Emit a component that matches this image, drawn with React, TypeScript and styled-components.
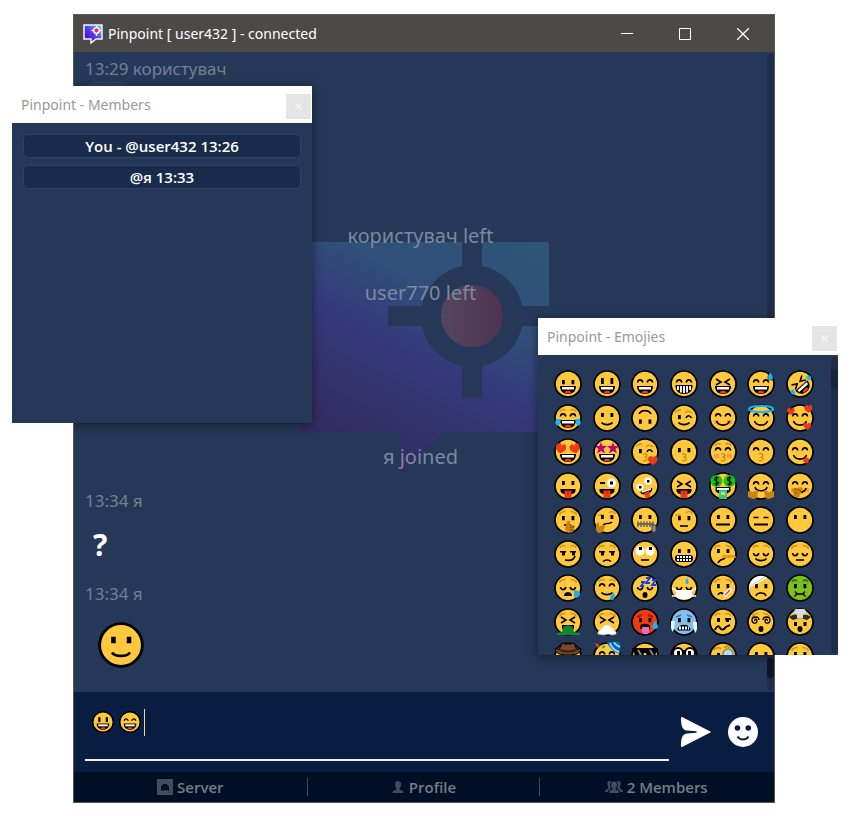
import React from "react";
import styled, { createGlobalStyle } from "styled-components";

const GlobalStyle = createGlobalStyle`
  * { box-sizing: border-box; }
  body {
    margin: 0;
    background: #ffffff;
    font-family: "Noto Sans", "Open Sans", sans-serif;
  }
  button { font: inherit; color: inherit; border: 0; background: none; padding: 0; cursor: pointer; }
  svg { display: block; }
`;

/* ---------- Emoji drawing ---------- */

const BROW = "#d6930f";
const line = { fill: "none", stroke: "#000", strokeWidth: 1.6 } as const;
const brow = { fill: "none", stroke: BROW, strokeWidth: 1.5 } as const;
const heartPath = "M0 5C-5 2-6-1-4-3S0-4 0-1.5C0-4 3-5 4-3S5 2 0 5z";
const starPath = "M0-6 1.5-2 6-2 2.5 1 4 5.5 0 3-4 5.5-2.5 1-6-2-1.5-2z";

const parts: Record<string, React.ReactNode> = {
  dots: <path d="M8 10h2.800v4.200H8zM17.500 10h2.800v4.200h-2.800z" />,
  tall: <path d="M8 8h2.800v6H8zM17.500 8h2.800v6h-2.800z" />,
  lowDots: <path d="M8 15.500h2.800v4.200H8zM17.500 15.500h2.800v4.200h-2.800z" />,
  highDots: <path d="M8 9h2.800v4H8zM17.500 9h2.800v4h-2.800z" />,
  happy: <path {...line} d="M6.500 12.500C7 9 11 9 11.800 12.500M16.200 12.500C17 9 21 9 21.500 12.500" />,
  closed: <path {...line} d="M6.500 13C7 16.500 11 16.500 11.800 13M16.200 13C17 16.500 21 16.500 21.500 13" />,
  squint: <path {...line} d="M7 9l5 3-5 3M21 9l-5 3 5 3" />,
  flatEyes: <path {...line} d="M6.500 11.500h5M16.500 11.500h5" />,
  wink: (
    <>
      <path d="M8 11h2.800v4.200H8z" />
      <path {...line} d="M16 14c1-3 4-3 5.500 0" />
      <path {...brow} d="M5 9c1-2 3-3 6-3M15 9c2-2.500 5-2 7 0" />
    </>
  ),
  brows: <path {...brow} d="M5.500 9C6 7 8 5.500 11.500 5.500M16.500 5.500C20 5.500 22 7 22.500 9" />,
  archBrows: <path {...brow} d="M6 8c1-3 4-3 5.500-1.500M16.500 6.500C18 5 21 5 22 8" />,
  oneBrow: <path {...brow} d="M5 9h6M16 7c2-2 5-2 6.500 1" />,
  open: (
    <>
      <path d="M6 16h16c0 5-3 8-8 8s-8-3-8-8z" />
      <path d="M8 17h12v2.500H8z" fill="#fff" />
      <path d="M10.500 22.500c1-2.500 6-2.500 7 0-2 1.300-5 1.300-7 0z" fill="#f03a17" />
    </>
  ),
  grin: (
    <>
      <path d="M5.500 15h17c0 6-3 9-8.500 9s-8.500-3-8.500-9z" />
      <path d="M7 16h2v4H7zM10 16h2v6.500h-2zM13 16h2v7h-2zM16 16h2v6.500h-2zM19 16h2v4h-2z" fill="#eee" />
    </>
  ),
  smile: <path {...line} d="M8.500 18.500c2 2.800 9 2.800 11 0" />,
  wideSmile: <path {...line} d="M7.500 17c2 5.500 11 5.500 13 0" />,
  flipSmile: <path {...line} d="M8 10c2-4.500 10-4.500 12 0" />,
  blush: <path d="M5 16h5v4H5zM18 16h5v4h-5z" fill="#ff9550" />,
  kiss: <path {...brow} d="M12 16c5-1 5 3 1.500 3C17 19 17 24 12 22.500" />,
  flat: <path {...line} strokeWidth={2} d="M7 18.500h14" />,
  shortFlat: <path {...line} d="M10 20h8" />,
  frown: <path {...line} d="M9 22c1-4 9-4 10 0" />,
  shortFrown: <path {...line} d="M10 21.500c2-2 6-2 8 0" />,
  smirk: <path {...line} d="M11 20c5 1 9 0 10-4" />,
  sideEyes: <path d="M6 11h6v1.500h-1v3H8v-3H6zM16 11h6v1.500h-1v3h-3v-3h-2z" />,
  tongue: (
    <>
      <path d="M6.500 17h15v1.500c0 2-2 4-7.500 4s-7.500-2-7.500-4z" />
      <path d="M10.500 18.500h7V26h-7z" fill="#f03a17" />
      <path d="M14 19v4" stroke="#c01a10" />
    </>
  ),
  tears: <path d="M2 15h5l-1 5-3 2-2-3zM26 15h-5l1 5 3 2 2-3z" fill="#1cb5f0" />,
  sideTears: <path d="M1.500 13l4 0-.5 4-2.500 1-1.500-2zM26.500 13l-4 0 .5 4 2.500 1 1.500-2z" fill="#1cb5f0" />,
  sweat: <path d="M23.500 2c4 5 3 8 0 8s-4-3 0-8z" fill="#1cb5f0" stroke="#000" strokeWidth=".5" />,
  halo: <ellipse cx="14" cy="5" rx="12" ry="3" fill="none" stroke="#16b5f5" strokeWidth="2" />,
  heartEyes: (
    <g fill="#f03a17">
      <path d={heartPath} transform="translate(7 10) rotate(15) scale(1.100)" />
      <path d={heartPath} transform="translate(21 10) rotate(-15) scale(1.100)" />
    </g>
  ),
  starEyes: (
    <g fill="#bf0077">
      <path d={starPath} transform="translate(8 10)" />
      <path d={starPath} transform="translate(20 10)" />
    </g>
  ),
  love: (
    <g fill="#f03a17">
      <path d={heartPath} transform="translate(5 7) scale(.8)" />
      <path d={heartPath} transform="translate(22.500 4.500) scale(.85)" />
      <path d={heartPath} transform="translate(21.500 22) scale(.8)" />
    </g>
  ),
  kissHeart: <path d={heartPath} transform="translate(22 22)" fill="#f03a17" />,
  lick: <path d="M17 22c2-4 7-3 6 1s-5 3-6-1z" fill="#f03a17" />,
  winkWide: (
    <>
      <circle cx="18.500" cy="11" r="4.500" fill="#fff" />
      <path d="M17 9.500h3v3h-3z" />
      <path {...line} strokeWidth={2} d="M7 11h5" />
    </>
  ),
  zany: (
    <>
      <circle cx="9" cy="15" r="3.500" fill="#fff" />
      <circle cx="17" cy="9" r="3.800" fill="#fff" />
      <path d="M8 14h2.500v2.500H8zM16 8h2.500v2.500H16z" />
      <path d="M9 20l12-4c2 4-8 10-12 4z" />
      <path d="M11 20l9-3" stroke="#fff" strokeWidth="1.500" />
      <path d="M13 21l5-2 1 6-4 2z" fill="#f03a17" />
    </>
  ),
  money: (
    <>
      <path d="M6.500 15h15v4c-2 4-13 4-15 0z" />
      <path d="M8 16h12v2H8z" fill="#fff" />
      <circle cx="7.500" cy="9" r="6" fill="#16c60c" />
      <circle cx="20.500" cy="9" r="6" fill="#16c60c" />
      <path {...line} strokeWidth={1.2} d="M9.500 6.500C8 4.500 5.500 5.500 5.500 7.200S9.500 9 9.500 10.800 7 13 5.500 11.300M7.500 4v10M22.500 6.500C21 4.500 18.500 5.500 18.500 7.200S22.500 9 22.500 10.800 20 13 18.500 11.300M20.500 4v10" />
      <path d="M10 18h8v9h-8z" fill="#38c967" />
      <path d="M12 20h4v3h-4z" fill="#a1ecba" />
    </>
  ),
  hug: (
    <>
      <path {...line} d="M8 15c1 5 11 5 12 0" />
      <path d="M1 19l5 1 5-2-1 8-4 1-5-2zM27 19l-5 1-5-2 1 8 4 1 5-2z" fill="#c98512" />
    </>
  ),
  coverHand: (
    <>
      <path {...line} d="M10 20c5 1 9 0 10-4" />
      <path d="M6 17l9-2 2 2-4 8H8z" fill="#c98512" />
      <path d="M9 16l1 2M12 17l1 2M9 20l2 2M14 18l1 2" stroke="#714b13" />
    </>
  ),
  shush: (
    <>
      <path {...line} d="M10 19h7" />
      <path d="M13 15h3v4h4l1 2-2 5-5 1-3-4z" fill="#c98512" />
      <path d="M16 21h4M16 24h4" stroke="#714b13" />
    </>
  ),
  think: (
    <>
      <path {...line} d="M10 19c3-3 6 0 9-3" />
      <path d="M3 18l3-2v4l6-1v2l-2 5-5 1-2-3z" fill="#c98512" />
    </>
  ),
  zip: (
    <>
      <path d="M6 18h17" stroke="#000" />
      <path d="M6 16.500h17M6 20h17" stroke="#757a80" strokeWidth="2" strokeDasharray="2 1" />
      <path d="M21 19h4v7h-4z" fill="#888e96" stroke="#444" />
    </>
  ),
  rollEyes: (
    <>
      <circle cx="9" cy="11" r="4.500" fill="#fff" />
      <circle cx="19" cy="11" r="4.500" fill="#fff" />
      <path d="M8 7h3v3H8zM18 7h3v3h-3z" />
    </>
  ),
  grimace: (
    <>
      <rect x="5" y="15" width="18" height="7" rx="3" />
      <path d="M7 17h14M7 20h14" stroke="#fff" strokeWidth="2" strokeDasharray="2 1" />
    </>
  ),
  lie: (
    <>
      <path {...line} d="M9 23c2-5 6-3 7-5" />
      <path d="M13 15h13l1 3H13z" fill="#e2a010" />
    </>
  ),
  sleepyTear: (
    <>
      <path d="M10 21c1-4 7-4 8 0v1h-8z" />
      <path d="M20 16c4 0 7 3 6 5s-5 5-6 1z" fill="#24aee0" />
    </>
  ),
  drool: <path d="M20 18c3 3 2 8-1 8s-2-4 1-8z" fill="#24aee0" />,
  zzz: <path d="M10 8h3l-3 4h3M15 4h4l-4 5h4M21 6h4l-4 5h4" fill="none" stroke="#123bed" strokeWidth="1.800" />,
  yawn: <ellipse cx="14" cy="21" rx="2.500" ry="3" />,
  mask: (
    <>
      <path d="M2 14l4 3h16l4-3M2 22l4 0M26 22h-4" stroke="#fff" strokeWidth="1.500" fill="none" />
      <path d="M6 16h16v7c-3 3-13 3-16 0z" fill="#fff" />
      <path d="M17 4c3 4 1 6 0 6s-3-2 0-6z" fill="#1cb5f0" />
    </>
  ),
  thermometer: (
    <>
      <path {...line} d="M9 21c2-4 5-2 7 1" />
      <path d="M15 22l7-7" stroke="#fff" strokeWidth="4" />
      <path d="M16 21l5-5" stroke="#f03a17" strokeWidth="1.500" />
    </>
  ),
  bandage: (
    <>
      <path d="M2 14c0-6 5-12 12-12 3 0 5 1 6 2z" fill="#fff" />
      <path d="M2 13L18 3" stroke="#c5c9cf" />
    </>
  ),
  nausea: <path {...line} strokeWidth={1.3} d="M8.500 22.500l2.500-2.500h6l2.500 2.500M9 17.500l2 2.500M19 17.500l-2 2.500" />,
  greenBrows: <path d="M6 8c1-3 4-2 5-1M17 7c1-1 4-2 5 1" fill="none" stroke="#177f2b" strokeWidth="2" />,
  vomit: (
    <>
      <path d="M8 17h12v4H8z" />
      <path d="M9 19l5-2 5 2 1 5 6 1v2H3v-2l5-1z" fill="#12862b" />
    </>
  ),
  tissue: <path d="M12 17h4l7 7v2l-4 1-4-1-4 1-6-1v-2z" fill="#fff" stroke="#c8ccd2" strokeWidth=".6" />,
  hot: (
    <>
      <path d="M9 18c1-3 9-3 10 0v3H9z" />
      <path d="M11 19h7v5c-1 3-6 3-7 0z" fill="#ef69c0" />
      <path d="M24 13c5 6 3 8 0 8s-4-2 0-8z" fill="#1cb5f0" />
      <path d="M6 9l5-2M17 7l5 2" stroke="#9d1d0d" strokeWidth="2" />
    </>
  ),
  cold: (
    <>
      <path d="M8 21c1-5 11-5 12 0v1H8z" stroke="#000" />
      <path d="M9 20h10" stroke="#fff" strokeWidth="3" strokeDasharray="2 1" />
      <path d="M1 13h4l-1 8-1.500 3-1.500-4zM27 14h-4l1 8 1.500 3 1.500-4z" fill="#e7f5ff" />
      <path d="M6 9l5-2M17 7l5 2" stroke="#2f74b5" strokeWidth="1.500" />
    </>
  ),
  woozy: (
    <>
      <path d="M8 10h3v4H8z" />
      <path d="M16 10h6v2h-2v2h-3z" />
      <path {...line} strokeWidth={2} d="M6 22c2-5 4-4 5-2s4 2 5 0 4-2 5-3" />
    </>
  ),
  dizzy: (
    <g {...line} strokeWidth={1.3}>
      <path d="M12 12c0-4-7-4-7 0s5 4 5 1-3-2-2 0M16 12c0-4 7-4 7 0s-5 4-5 1 3-2 2 0" />
    </g>
  ),
  explode: (
    <>
      <path d="M4 10c3-3 17-3 20 0l-4 2-6-2-6 2z" fill="#b56d2a" />
      <path d="M3 9c4-4 18-4 22 0l-4 3-7-3-7 3z" fill="#262a33" />
      <path d="M8 4c0-4 4-3 6-3s6-1 6 3-2 2-3 3v3h-6V7C10 6 8 6 8 4z" fill="#d6d9dd" />
      <path d="M8 14h3v4H8zM17.500 14h3v4h-3z" />
    </>
  ),
  cowboy: (
    <>
      <path d="M1 6l4 2 3-7 4 1h4l4-1 3 7 4-2c0 6-6 7-13 7S1 12 1 6z" fill="#7a462b" stroke="#000" />
      <path d="M6 8c4 2 12 2 16 0" stroke="#3c1d10" strokeWidth="2" fill="none" />
    </>
  ),
  party: (
    <>
      <path d="M14 0h13v12c-5-2-10-4-13-12z" fill="#0067b8" />
      <path d="M17 1c1 5 4 7 9 9M21 0c1 3 3 4 6 5" stroke="#8bd3ff" strokeWidth="2" fill="none" />
      <path d="M2 1l5 2-3 3z" fill="#f03a17" />
      <path d="M9 6l3-2" stroke="#16c60c" strokeWidth="2" />
    </>
  ),
  shades: (
    <>
      <path d="M1 6h26v3l-2 1-1 5h-8l-1-4h-2l-1 4H4l-1-5-2-1z" />
      <path d="M7 8l3 5M19 8l3 5" stroke="#888" strokeWidth="2" />
    </>
  ),
  glasses: (
    <>
      <path d="M1 9h26" stroke="#000" strokeWidth="2" />
      <circle cx="8" cy="11" r="5" fill="#fff" stroke="#000" strokeWidth="2" />
      <circle cx="20" cy="11" r="5" fill="#fff" stroke="#000" strokeWidth="2" />
      <path d="M7 9h3v4H7zM18 9h3v4h-3z" />
    </>
  ),
  monocle: (
    <>
      <circle cx="19" cy="12" r="5" fill="#b9dcef" stroke="#7d8790" strokeWidth="1.500" />
      <path d="M8 11h3v4H8z" />
      <path {...brow} strokeWidth={2} d="M5 8c2-3 5-3 7-1M15 6c2-2 5-2 7 0" />
    </>
  ),
};

type Face = { name: string; look: string; tone?: string; tilt?: boolean };

const faces: Face[] = [
  { name: "grinning", look: "dots open" },
  { name: "smiley", look: "tall open" },
  { name: "smile", look: "happy open" },
  { name: "beaming", look: "happy grin" },
  { name: "squinting", look: "squint open" },
  { name: "sweat smile", look: "happy open sweat" },
  { name: "rolling laughing", look: "squint open sideTears", tilt: true },
  { name: "joy", look: "archBrows happy open tears" },
  { name: "slight smile", look: "highDots smile" },
  { name: "upside down", look: "lowDots flipSmile" },
  { name: "wink", look: "wink smile" },
  { name: "blush", look: "happy blush wideSmile" },
  { name: "halo", look: "happy wideSmile halo" },
  { name: "adoring", look: "happy wideSmile love" },
  { name: "heart eyes", look: "open heartEyes" },
  { name: "star struck", look: "open starEyes" },
  { name: "blowing kiss", look: "wink kiss kissHeart" },
  { name: "kissing", look: "dots kiss" },
  { name: "kissing blush", look: "archBrows happy blush kiss" },
  { name: "kissing smile", look: "happy kiss" },
  { name: "yum", look: "happy wideSmile lick" },
  { name: "tongue out", look: "highDots tongue" },
  { name: "winking tongue", look: "winkWide tongue" },
  { name: "zany", look: "zany" },
  { name: "squinting tongue", look: "squint tongue" },
  { name: "money mouth", look: "money" },
  { name: "hugging", look: "happy hug" },
  { name: "hand over mouth", look: "happy blush coverHand" },
  { name: "shushing", look: "brows dots shush" },
  { name: "thinking", look: "oneBrow highDots think" },
  { name: "zipper mouth", look: "highDots zip" },
  { name: "raised eyebrow", look: "oneBrow dots shortFlat" },
  { name: "neutral", look: "highDots flat" },
  { name: "expressionless", look: "flatEyes flat" },
  { name: "no mouth", look: "highDots" },
  { name: "smirk", look: "archBrows sideEyes smirk" },
  { name: "unamused", look: "archBrows sideEyes shortFrown" },
  { name: "rolling eyes", look: "rollEyes shortFlat" },
  { name: "grimacing", look: "highDots grimace" },
  { name: "lying", look: "brows highDots lie" },
  { name: "relieved", look: "archBrows closed smile" },
  { name: "pensive", look: "brows closed shortFlat" },
  { name: "sleepy", look: "brows closed sleepyTear" },
  { name: "drooling", look: "archBrows happy smile drool" },
  { name: "sleeping", look: "closed yawn zzz" },
  { name: "medical mask", look: "closed mask" },
  { name: "thermometer", look: "brows dots thermometer" },
  { name: "head bandage", look: "dots frown bandage" },
  { name: "nauseated", look: "greenBrows dots nausea", tone: "#7fbf1a" },
  { name: "vomiting", look: "brows squint vomit" },
  { name: "sneezing", look: "brows squint tissue" },
  { name: "hot", look: "dots hot", tone: "#f03a17" },
  { name: "cold", look: "dots cold", tone: "#83beec" },
  { name: "woozy", look: "archBrows woozy" },
  { name: "dizzy", look: "brows dizzy yawn" },
  { name: "exploding head", look: "explode yawn" },
  { name: "cowboy", look: "dots open cowboy" },
  { name: "partying", look: "happy smile party" },
  { name: "sunglasses", look: "smile shades" },
  { name: "nerd", look: "open glasses" },
  { name: "monocle", look: "monocle frown" },
  { name: "confused", look: "dots frown" },
  { name: "worried", look: "brows dots frown" },
];

const EmojiSvg = styled.svg<{ $size: number }>`
  width: ${(p) => p.$size}px;
  height: ${(p) => p.$size}px;
  flex: none;
`;

function Emoji({ face, size = 28 }: { face: Face; size?: number }) {
  return (
    <EmojiSvg $size={size} viewBox="0 0 28 28" role="img" aria-label={face.name}>
      <circle cx="14" cy="14" r="13" fill={face.tone ?? "#ffc83d"} stroke="#000" strokeWidth="1.700" />
      <g transform={face.tilt ? "rotate(-42 14 14)" : undefined}>
        {face.look.split(" ").map((part) => (
          <React.Fragment key={part}>{parts[part]}</React.Fragment>
        ))}
      </g>
    </EmojiSvg>
  );
}

/* ---------- Desktop and windows ---------- */

const Desktop = styled.div`
  position: relative;
  min-height: 100vh;
  padding: 14px 76px 13px 73px;
  display: flex;
  overflow: hidden;
`;

const MainWindow = styled.main`
  position: relative;
  flex: 1;
  min-width: 0;
  display: flex;
  flex-direction: column;
  overflow: hidden;
  border: 1px solid #5a5958;
  background: #253858;

  &::before,
  &::after {
    content: "";
    position: absolute;
    z-index: 1;
    width: 300px;
    height: 337px;
    box-shadow: 0 2px 10px rgba(0, 0, 0, 0.45);
    pointer-events: none;
  }
  &::before { left: -62px; top: 71px; }
  &::after { right: -64px; top: 303px; }
`;

const TitleBar = styled.header`
  display: flex;
  align-items: center;
  height: 37px;
  padding: 0 2px 0 9px;
  background: #4c4a47;
  color: #ffffff;
`;

const WindowTitle = styled.h1`
  flex: 1;
  margin: 0 0 0 5px;
  font: 400 14px/20px "Noto Sans", "Open Sans", sans-serif;
`;

const WindowControl = styled.button`
  width: 58px;
  height: 37px;
  display: grid;
  place-items: center;
`;

const Popup = styled.section<{ $side: "left" | "right" }>`
  position: absolute;
  z-index: 2;
  top: ${(p) => (p.$side === "left" ? 86 : 318)}px;
  ${(p) => (p.$side === "left" ? "left: 12px;" : "right: 13px;")}
  width: 300px;
  height: 337px;
  display: flex;
  flex-direction: column;
  background: #253858;
`;

const PopupBar = styled.header`
  display: flex;
  align-items: center;
  flex: none;
  height: 37px;
  padding: 0 1px 0 9px;
  background: #ffffff;
  color: #999999;
`;

const PopupTitle = styled.h2`
  flex: 1;
  margin: 0;
  font: 400 14px/20px "Noto Sans", "Open Sans", sans-serif;
`;

const PopupClose = styled.button`
  align-self: flex-end;
  width: 25px;
  height: 25px;
  margin-bottom: 4px;
  display: grid;
  place-items: center;
  background: #e5e5e5;
`;

const MemberList = styled.div`
  display: flex;
  flex-direction: column;
  gap: 7px;
  padding: 11px;
`;

const MemberButton = styled.button`
  height: 24px;
  border: 1px solid #2f4265;
  border-radius: 5px;
  background: #192b4b;
  color: #ffffff;
  font-family: "Open Sans", "Noto Sans", sans-serif;
  font-size: 15px;
  font-weight: 600;
  line-height: 22px;
`;

const EmojiScroller = styled.div`
  flex: 1;
  min-height: 0;
  display: flex;
  overflow: hidden;
`;

const EmojiGrid = styled.div`
  flex: 1;
  display: grid;
  grid-template-columns: repeat(7, 1fr);
  grid-auto-rows: 34px;
  padding: 12px 12px 0 11px;
`;

const EmojiButton = styled.button`
  display: grid;
  place-items: center;
`;

const ScrollTrack = styled.div`
  flex: none;
  width: 7px;
  margin: 2px 0;
  display: flex;
  flex-direction: column;
  border-radius: 4px;
  background: #1e2d49;
`;

const ScrollThumb = styled.div<{ $end?: boolean }>`
  height: 20px;
  margin-top: ${(p) => (p.$end ? "auto" : "12px")};
  margin-bottom: ${(p) => (p.$end ? "12px" : "0")};
  border-radius: 4px;
  background: ${(p) => (p.$end ? "#0e1625" : "#1a253b")};
`;

/* ---------- Chat ---------- */

const Chat = styled.section`
  position: relative;
  flex: 1;
  display: flex;
`;

const Watermark = styled.div`
  position: absolute;
  inset: 0;
  display: grid;
  place-items: center;
  padding-bottom: 28px;
`;

const History = styled.div`
  position: relative;
  flex: 1;
  display: flex;
  flex-direction: column;
  padding: 5px 11px 24px;
`;

const Recent = styled.div`
  display: flex;
  flex-direction: column;
  margin-top: auto;
`;

const Meta = styled.div`
  color: #718096;
  font-size: 17px;
  line-height: 24px;
`;

const Bubble = styled.div`
  width: 46px;
  height: 40px;
  border-radius: 12px;
  background: #2d3e5d;
`;

const SystemLine = styled.p<{ $gap: number }>`
  margin: 0 0 ${(p) => p.$gap}px;
  color: #7b89a0;
  text-align: center;
  font-size: 20px;
  line-height: 30px;
`;

const Message = styled.article`
  margin-bottom: 17px;
  &:last-child { margin-bottom: 0; }
`;

const BigText = styled.p`
  margin: 0;
  padding: 12px 8px 0;
  color: #ffffff;
  font-size: 30px;
  font-weight: 700;
  line-height: 40px;
`;

const BigEmoji = styled.div`
  padding: 16px 13px 0;
`;

/* ---------- Composer and footer ---------- */

const Composer = styled.form`
  display: flex;
  align-items: center;
  height: 80px;
  padding: 0 16px 0 11px;
  background: #091d43;
`;

const Field = styled.div`
  flex: 1;
  min-width: 0;
  display: flex;
  align-items: center;
  gap: 5px;
  height: 58px;
  margin-right: 12px;
  padding: 0 0 18px 7px;
  border-bottom: 2px solid #eef2fa;
`;

const Caret = styled.span`
  width: 1px;
  height: 27px;
  margin-left: -2px;
  background: #f0d5a4;
`;

const TextInput = styled.input`
  flex: 1;
  min-width: 0;
  border: 0;
  outline: 0;
  background: transparent;
  color: #ffffff;
  font: 400 20px/27px "Noto Sans", sans-serif;
`;

const IconButton = styled.button`
  width: 30px;
  height: 30px;
  & + & { margin-left: 17px; }
`;

const Footer = styled.nav`
  display: grid;
  grid-template-columns: repeat(3, 1fr);
  align-items: center;
  height: 30px;
  padding-right: 2px;
  background: #000f25;
`;

const FooterButton = styled.button`
  display: flex;
  align-items: center;
  justify-content: center;
  gap: 4px;
  height: 18px;
  color: #747d89;
  font-family: "Open Sans", "Noto Sans", sans-serif;
  font-size: 15px;
  font-weight: 600;
  line-height: 18px;
  & + & { border-left: 1px solid #3f4a5b; }
  svg { fill: #424c5e; }
`;

/* ---------- Icons ---------- */

function AppLogo() {
  return (
    <svg width="20" height="20" viewBox="0 0 20 20" aria-hidden="true">
      <defs>
        <linearGradient id="appFill" x1="0" y1="1" x2="1" y2="0">
          <stop offset="0" stopColor="#41008f" />
          <stop offset=".45" stopColor="#5530e0" />
          <stop offset="1" stopColor="#5fd2ff" />
        </linearGradient>
      </defs>
      <path d="M1 1h18v14h-6l-5 4v-4H1z" fill="url(#appFill)" stroke="#f4f2f5" strokeWidth="1.500" />
      <path d="M13.500 2v10M8.500 6.500h10" stroke="#fff" strokeWidth="1.300" />
      <circle cx="13.500" cy="6.500" r="2.800" fill="#f0304f" stroke="#fff" strokeWidth="1.300" />
    </svg>
  );
}

function WatermarkLogo() {
  return (
    <svg width="250" height="232" viewBox="0 0 250 232" aria-hidden="true">
      <defs>
        <linearGradient id="markFill" gradientUnits="userSpaceOnUse" x1="14" y1="188" x2="139" y2="-57">
          <stop offset="0" stopColor="#322b60" />
          <stop offset=".44" stopColor="#343b7a" />
          <stop offset=".65" stopColor="#304f7a" />
          <stop offset="1" stopColor="#2f5577" />
        </linearGradient>
        <linearGradient id="dotFill">
          <stop offset="0" stopColor="#54465f" />
          <stop offset="1" stopColor="#4e3352" />
        </linearGradient>
      </defs>
      <path
        d="M2 0h246l2 2v186l-2 2H144l-40 41q-3 2-3-1v-40H2l-2-2V2z"
        fill="url(#markFill)"
      />
      <path d="M163 0h20v156h-20zM89 64h161v20H89z" fill="#253858" />
      <circle cx="173" cy="74" r="51" fill="#253858" />
      <circle cx="173" cy="74" r="31" fill="url(#dotFill)" />
    </svg>
  );
}

const MinimizeIcon = () => (
  <svg width="12" height="12" viewBox="0 0 12 12"><path d="M0 5h12v1H0z" fill="#fff" /></svg>
);
const MaximizeIcon = () => (
  <svg width="12" height="12" viewBox="0 0 12 12"><path d="M.5.5h11v11H.5z" fill="none" stroke="#fff" /></svg>
);
const CloseIcon = () => (
  <svg width="12" height="12" viewBox="0 0 12 12"><path d="M0 0l12 12M12 0L0 12" stroke="#fff" strokeWidth="1.300" /></svg>
);
const SmallCloseIcon = () => (
  <svg width="7" height="7" viewBox="0 0 7 7"><path d="M0 0l7 7M7 0L0 7" stroke="#f5f5f5" strokeWidth="1.500" /></svg>
);
const SendIcon = () => (
  <svg width="30" height="30" viewBox="0 0 30 30">
    <path d="M0 1.200Q0-.6 1.600.3L29.300 14.400q1 .6 0 1.200L1.600 29.700Q0 30.600 0 28.800C0 22 1 17 6 16.500L15.500 15.800v-1.600L6 13.500C1 13 0 8 0 1.200z" fill="#fff" />
  </svg>
);
const SmileIcon = () => (
  <svg width="30" height="30" viewBox="0 0 30 30">
    <circle cx="15" cy="15" r="15" fill="#fff" />
    <circle cx="9.500" cy="11" r="2.800" fill="#091d43" />
    <circle cx="20.300" cy="11" r="2.800" fill="#091d43" />
    <path d="M9.500 19.500c2.500 4 8.500 4 11 0" fill="none" stroke="#091d43" strokeWidth="2" />
  </svg>
);
const ServerIcon = () => (
  <svg width="16" height="16" viewBox="0 0 16 16" aria-hidden="true">
    <path fillRule="evenodd" d="M0 0h16v16H0zM4 12V7h1V6h1V5h4v1h1v1h1v5h-1v-1h-1v1H9v-1H7v1H6v-1H5v1z" />
  </svg>
);
const ProfileIcon = () => (
  <svg width="14" height="12" viewBox="0 0 14 12" aria-hidden="true">
    <path d="M7 0c2 0 3 1.500 3 3.500S9 7 8.500 7.500v1C10 9.500 12.500 9 12.500 12h-11C1.500 9 4 9.500 5.500 8.500v-1C5 7 4 5.500 4 3.500S5 0 7 0z" />
  </svg>
);
const MembersIcon = () => (
  <svg width="18" height="12" viewBox="0 0 18 12" aria-hidden="true">
    <path d="M9 .5c2 0 3 1.500 3 3.500S11 7 10.500 7.500v1c1.500 1 3.500.5 3.500 3.500H4c0-3 2-2.500 3.500-3.500v-1C7 7 6 6 6 4S7 .5 9 .5z" />
    <path d="M5 0C2.500 0 2 2 2.500 4s1 2 1 3C2.500 8.500 0 8 0 11h3c0-2 1.500-2.500 3-3.500C4.500 5 4.500 2 6.500.5zM13 0c2.500 0 3 2 2.500 4s-1 2-1 3c1 1.500 3.500 1 3.500 4h-3c0-2-1.500-2.500-3-3.500C13.500 5 13.500 2 11.500.5z" />
  </svg>
);

/* ---------- App ---------- */

const members = ["You - @user432 13:26", "@я 13:33"];

export default function App() {
  return (
    <Desktop>
      <GlobalStyle />
      <MainWindow>
        <TitleBar>
          <AppLogo />
          <WindowTitle>Pinpoint [ user432 ] - connected</WindowTitle>
          <WindowControl aria-label="Minimize"><MinimizeIcon /></WindowControl>
          <WindowControl aria-label="Maximize"><MaximizeIcon /></WindowControl>
          <WindowControl aria-label="Close"><CloseIcon /></WindowControl>
        </TitleBar>
        <Chat>
          <Watermark><WatermarkLogo /></Watermark>
          <History>
            <Meta>13:29 користувач</Meta>
            <Bubble />
            <Recent>
              <SystemLine $gap={27}>користувач left</SystemLine>
              <SystemLine $gap={134}>user770 left</SystemLine>
              <SystemLine $gap={17}>я joined</SystemLine>
              <Message>
                <Meta>13:34 я</Meta>
                <BigText>?</BigText>
              </Message>
              <Message>
                <Meta>13:34 я</Meta>
                <BigEmoji><Emoji face={faces[8]} size={46} /></BigEmoji>
              </Message>
            </Recent>
          </History>
          <ScrollTrack><ScrollThumb $end /></ScrollTrack>
        </Chat>
        <Composer onSubmit={(e) => e.preventDefault()}>
          <Field>
            <Emoji face={faces[1]} size={22} />
            <Emoji face={faces[2]} size={22} />
            <Caret />
            <TextInput type="text" aria-label="Message" />
          </Field>
          <IconButton type="submit" aria-label="Send"><SendIcon /></IconButton>
          <IconButton type="button" aria-label="Emojies"><SmileIcon /></IconButton>
        </Composer>
        <Footer>
          <FooterButton><ServerIcon />Server</FooterButton>
          <FooterButton><ProfileIcon />Profile</FooterButton>
          <FooterButton><MembersIcon />2 Members</FooterButton>
        </Footer>
      </MainWindow>

      <Popup $side="left">
        <PopupBar>
          <PopupTitle>Pinpoint - Members</PopupTitle>
          <PopupClose aria-label="Close members"><SmallCloseIcon /></PopupClose>
        </PopupBar>
        <MemberList>
          {members.map((m) => (
            <MemberButton key={m}>{m}</MemberButton>
          ))}
        </MemberList>
      </Popup>

      <Popup $side="right">
        <PopupBar>
          <PopupTitle>Pinpoint - Emojies</PopupTitle>
          <PopupClose aria-label="Close emojies"><SmallCloseIcon /></PopupClose>
        </PopupBar>
        <EmojiScroller>
          <EmojiGrid>
            {faces.map((f) => (
              <EmojiButton key={f.name} aria-label={f.name}><Emoji face={f} /></EmojiButton>
            ))}
          </EmojiGrid>
          <ScrollTrack><ScrollThumb /></ScrollTrack>
        </EmojiScroller>
      </Popup>
    </Desktop>
  );
}
